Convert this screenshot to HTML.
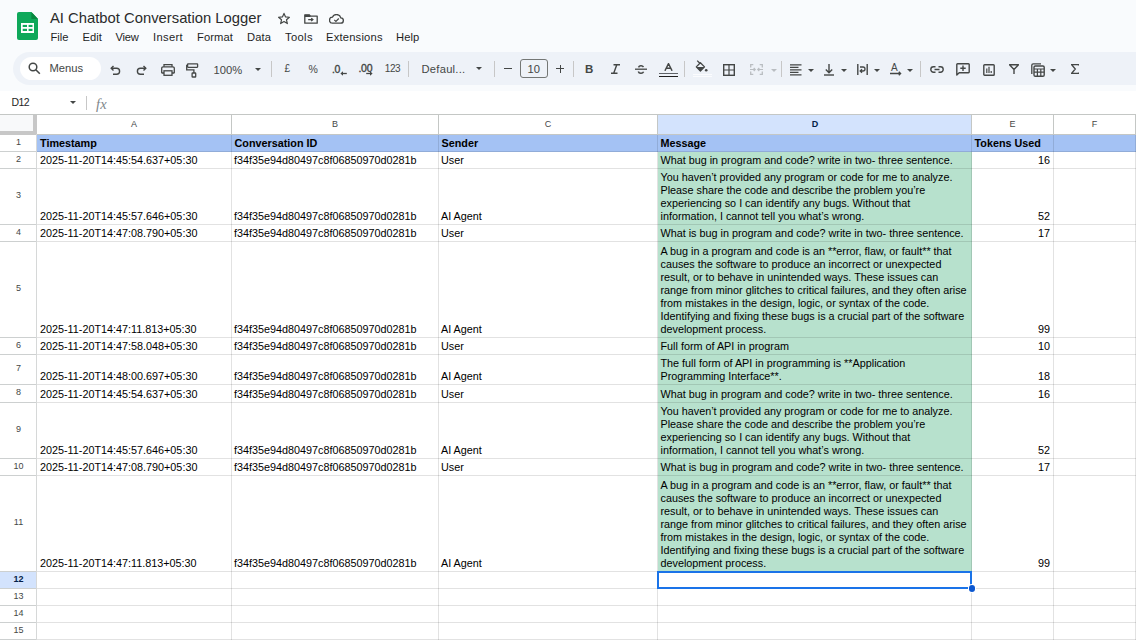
<!DOCTYPE html><html><head><meta charset="utf-8"><style>
html,body{margin:0;padding:0;}
body{width:1136px;height:640px;overflow:hidden;position:relative;background:#f9fbfd;font-family:"Liberation Sans", sans-serif;}
.r{position:absolute;}
.t{position:absolute;white-space:pre;}
.i{position:absolute;}
</style></head><body>
<svg class="i" style="left:17px;top:12px" width="21" height="28" viewBox="0 0 21 28">
<path d="M2 0H14.4L21 7V26a2 2 0 0 1-2 2H2a2 2 0 0 1-2-2V2a2 2 0 0 1 2-2z" fill="#0fa85a"/>
<path d="M14.4 0V7H21z" fill="#08873f"/>
<rect x="4" y="11" width="13" height="10" fill="#fff"/>
<rect x="5.7" y="12.9" width="4.3" height="2.1" fill="#0fa85a"/>
<rect x="11.6" y="12.9" width="3.9" height="2.1" fill="#0fa85a"/>
<rect x="5.7" y="16.8" width="4.3" height="2.2" fill="#0fa85a"/>
<rect x="11.6" y="16.8" width="3.9" height="2.2" fill="#0fa85a"/>
</svg>
<div class="t" style="left:50px;top:8.62px;font-size:14.8px;line-height:18px;color:#2b2b2b;">AI Chatbot Conversation Logger</div>
<svg class="i" style="left:277px;top:12px" width="14" height="13" viewBox="0 0 24 24"><path d="M12 2.6l2.9 6.5 7.1.6-5.4 4.7 1.6 7-6.2-3.8-6.2 3.8 1.6-7L2 9.7l7.1-.6z" fill="none" stroke="#444746" stroke-width="2.2" stroke-linejoin="round"/></svg>
<svg class="i" style="left:303.5px;top:13.8px" width="14" height="10" viewBox="0 0 14 10"><path d="M0.8 0.8H5.2L6.5 2.1H13.2V9.2H0.8Z" fill="none" stroke="#444746" stroke-width="1.3" stroke-linejoin="round"/><path d="M0.8 0.8H5.2L6.5 2.1V3H0.8Z" fill="#444746"/><path d="M4.2 5.6H8.8M7.2 4.1L8.9 5.6 7.2 7.1" fill="none" stroke="#444746" stroke-width="1.25"/></svg>
<svg class="i" style="left:329px;top:13.8px" width="15" height="10" viewBox="0 0 15 10"><path d="M3.6 9.2H11.5a2.7 2.7 0 0 0 .3-5.4A4.4 4.2 0 0 0 3.4 3.2 3 3 0 0 0 3.6 9.2Z" fill="none" stroke="#444746" stroke-width="1.3"/><path d="M5.3 5.9l1.6 1.5 2.9-2.9" fill="none" stroke="#444746" stroke-width="1.2"/></svg>
<div class="t" style="left:50.5px;top:29.72px;font-size:11.2px;line-height:14px;color:#1f1f1f;letter-spacing:0px;">File</div>
<div class="t" style="left:82.5px;top:29.72px;font-size:11.2px;line-height:14px;color:#1f1f1f;letter-spacing:0px;">Edit</div>
<div class="t" style="left:115.5px;top:29.72px;font-size:11.2px;line-height:14px;color:#1f1f1f;letter-spacing:-0.2px;">View</div>
<div class="t" style="left:153px;top:29.72px;font-size:11.2px;line-height:14px;color:#1f1f1f;letter-spacing:0.35px;">Insert</div>
<div class="t" style="left:197px;top:29.72px;font-size:11.2px;line-height:14px;color:#1f1f1f;letter-spacing:0.1px;">Format</div>
<div class="t" style="left:247px;top:29.72px;font-size:11.2px;line-height:14px;color:#1f1f1f;letter-spacing:0.15px;">Data</div>
<div class="t" style="left:285px;top:29.72px;font-size:11.2px;line-height:14px;color:#1f1f1f;letter-spacing:0.35px;">Tools</div>
<div class="t" style="left:326px;top:29.72px;font-size:11.2px;line-height:14px;color:#1f1f1f;letter-spacing:0.2px;">Extensions</div>
<div class="t" style="left:396px;top:29.72px;font-size:11.2px;line-height:14px;color:#1f1f1f;letter-spacing:0.1px;">Help</div>
<div class="r" style="left:13px;top:52px;width:1160px;height:33px;background:#eef2f8;border-radius:16.5px;"></div>
<div class="r" style="left:20px;top:57px;width:81px;height:23px;background:#fff;border-radius:11.5px;"></div>
<svg class="i" style="left:28px;top:62px" width="13" height="13" viewBox="0 0 13 13"><circle cx="5" cy="5" r="3.8" fill="none" stroke="#444746" stroke-width="1.5"/><path d="M7.8 7.8L11.8 11.8" stroke="#444746" stroke-width="1.6"/></svg>
<div class="t" style="left:49.5px;top:61.02px;font-size:11.2px;line-height:14px;color:#444746;">Menus</div>
<svg class="i" style="left:110px;top:64px" width="11" height="11" viewBox="0 0 11 11"><path d="M3.5 2L1.2 4.3 3.5 6.6" fill="none" stroke="#444746" stroke-width="1.4"/><path d="M1.5 4.3H6.6a3 3 0 0 1 0 6H3" fill="none" stroke="#444746" stroke-width="1.4"/></svg>
<svg class="i" style="left:136px;top:64px" width="11" height="11" viewBox="0 0 11 11"><path d="M7.5 2L9.8 4.3 7.5 6.6" fill="none" stroke="#444746" stroke-width="1.4"/><path d="M9.5 4.3H4.4a3 3 0 0 0 0 6H8" fill="none" stroke="#444746" stroke-width="1.4"/></svg>
<svg class="i" style="left:160.5px;top:63.5px" width="14" height="12" viewBox="0 0 14 12"><path d="M3 2.8V0.7H11V2.8" fill="none" stroke="#444746" stroke-width="1.3"/><path d="M3 9H1.1a.4.4 0 0 1-.4-.4V4.2a1.4 1.4 0 0 1 1.4-1.4H11.9a1.4 1.4 0 0 1 1.4 1.4V8.6a.4.4 0 0 1-.4.4H11" fill="none" stroke="#444746" stroke-width="1.3"/><rect x="3" y="6.8" width="8" height="4.5" fill="none" stroke="#444746" stroke-width="1.3"/></svg>
<svg class="i" style="left:186px;top:62.5px" width="13" height="15" viewBox="0 0 13 15"><rect x="1.6" y="0.8" width="10" height="3.5" rx="0.5" fill="none" stroke="#444746" stroke-width="1.3"/><path d="M1.6 2.5H0.7V6.9H7.9V10" fill="none" stroke="#444746" stroke-width="1.3"/><rect x="6.1" y="10" width="3.6" height="4" rx="0.6" fill="none" stroke="#444746" stroke-width="1.3"/></svg>
<div class="t" style="left:213.5px;top:62.62px;font-size:11.2px;line-height:14px;color:#444746;">100%</div>
<svg class="i" style="left:254.5px;top:67.8px" width="6" height="3" viewBox="0 0 6 3"><path d="M0 0H6L3 3z" fill="#444746"/></svg>
<div class="r" style="left:271px;top:60.5px;width:1px;height:16.5px;background:#c7c7c7;"></div>
<div class="t" style="left:284.5px;top:62.83px;font-size:10px;line-height:12px;color:#444746;">£</div>
<div class="t" style="left:308.5px;top:63.36px;font-size:10.5px;line-height:12px;color:#444746;">%</div>
<div class="t" style="left:332px;top:63.16px;font-size:10.5px;line-height:12px;color:#444746;-webkit-text-stroke:0.35px #444746;letter-spacing:-0.3px;">.0</div>
<svg class="i" style="left:339.5px;top:71px" width="7" height="5" viewBox="0 0 7 5"><path d="M6.8 2.5H1.5" stroke="#444746" stroke-width="1.3"/><path d="M0.4 2.5L3 0.3V4.7Z" fill="#444746"/></svg>
<div class="t" style="left:358.5px;top:61.56px;font-size:10.5px;line-height:12px;color:#444746;-webkit-text-stroke:0.35px #444746;letter-spacing:-0.3px;">.00</div>
<svg class="i" style="left:365.5px;top:71px" width="7" height="5" viewBox="0 0 7 5"><path d="M0.2 2.5H5.5" stroke="#444746" stroke-width="1.3"/><path d="M6.6 2.5L4 0.3V4.7Z" fill="#444746"/></svg>
<div class="t" style="left:384.8px;top:62.94px;font-size:10px;line-height:12px;color:#444746;letter-spacing:-0.45px;">123</div>
<div class="r" style="left:408px;top:60.5px;width:1px;height:16.5px;background:#c7c7c7;"></div>
<div class="t" style="left:421.5px;top:62.02px;font-size:11.2px;line-height:14px;color:#444746;letter-spacing:0.25px;">Defaul...</div>
<svg class="i" style="left:476.2px;top:67px" width="6" height="3" viewBox="0 0 6 3"><path d="M0 0H6L3 3z" fill="#444746"/></svg>
<div class="r" style="left:494px;top:60.5px;width:1px;height:16.5px;background:#c7c7c7;"></div>
<div class="r" style="left:504px;top:68px;width:8.3px;height:1.4px;background:#444746;"></div>
<div class="r" style="left:520px;top:59px;width:27.5px;height:19px;background:transparent;border:1px solid #747775;border-radius:3px;box-sizing:border-box;"></div>
<div class="t" style="left:527.5px;top:61.92px;font-size:11.2px;line-height:14px;color:#444746;">10</div>
<div class="r" style="left:556px;top:68px;width:8.4px;height:1.4px;background:#444746;"></div>
<div class="r" style="left:559.5px;top:64.5px;width:1.4px;height:8.4px;background:#444746;"></div>
<div class="r" style="left:573px;top:60.5px;width:1px;height:16.5px;background:#c7c7c7;"></div>
<div class="t" style="left:585px;top:62.02px;font-size:11.5px;line-height:14px;color:#444746;font-weight:bold;">B</div>
<svg class="i" style="left:610px;top:64px" width="11" height="10" viewBox="0 0 11 10"><path d="M3.5 0.7H10M1 9.3H7.5M6.8 0.7L3.7 9.3" fill="none" stroke="#444746" stroke-width="1.4"/></svg>
<svg class="i" style="left:634px;top:64px" width="14" height="11" viewBox="0 0 14 11"><path d="M1 5.2H13" stroke="#444746" stroke-width="1.3"/><path d="M9.5 3a2.8 2.4 0 0 0-5 0.3M4.3 7.5a2.8 2.4 0 0 0 5.3 0.3" fill="none" stroke="#444746" stroke-width="1.5"/></svg>
<svg class="i" style="left:664px;top:63px" width="9" height="8" viewBox="0 0 9 8"><path d="M0.9 7.8L4.5 0.6 8.1 7.8M2.2 5.3H6.8" fill="none" stroke="#444746" stroke-width="1.4" stroke-linejoin="round"/></svg>
<div class="r" style="left:659px;top:72.9px;width:19px;height:1.2px;background:#5f6368;"></div>
<div class="r" style="left:659px;top:75.8px;width:19px;height:1.5px;background:#1f1f1f;"></div>
<div class="r" style="left:684px;top:60.5px;width:1px;height:16.5px;background:#c7c7c7;"></div>
<svg class="i" style="left:695px;top:59.5px" width="13" height="13" viewBox="0 0 13 13"><path d="M2.2 0.6L4.8 3.2" stroke="#444746" stroke-width="1.3"/><path d="M1.3 6.9L5.4 2.8 9.5 6.9 5.4 11Z" fill="none" stroke="#444746" stroke-width="1.3" stroke-linejoin="round"/><path d="M1.3 6.9H9.5L5.4 11Z" fill="#444746"/><circle cx="11.2" cy="10.2" r="1.3" fill="#444746"/></svg>
<div class="r" style="left:692.5px;top:73.5px;width:19px;height:1.1px;background:#fbfcfe;"></div>
<div class="r" style="left:692.5px;top:76px;width:19px;height:1.1px;background:#fbfcfe;"></div>
<svg class="i" style="left:723px;top:63.5px" width="12" height="12" viewBox="0 0 12 12"><rect x="0.7" y="0.7" width="10.6" height="10.6" fill="none" stroke="#444746" stroke-width="1.4"/><path d="M6 0.7V11.3M0.7 6H11.3" stroke="#444746" stroke-width="1.2"/></svg>
<svg class="i" style="left:749.5px;top:64px" width="13" height="11" viewBox="0 0 13 11"><path d="M3.3 0.7H0.7V3.4M0.7 7.6V10.3H3.3M9.7 0.7H12.3V3.4M12.3 7.6V10.3H9.7" fill="none" stroke="#b9bdc1" stroke-width="1.3"/><path d="M0 5.5H5.2M3.7 4L5.2 5.5 3.7 7M13 5.5H7.8M9.3 4L7.8 5.5 9.3 7" fill="none" stroke="#b9bdc1" stroke-width="1.2"/></svg>
<svg class="i" style="left:770.5px;top:68.5px" width="6" height="3" viewBox="0 0 6 3"><path d="M0 0H6L3 3z" fill="#b9bdc1"/></svg>
<div class="r" style="left:781px;top:60.5px;width:1px;height:16.5px;background:#c7c7c7;"></div>
<svg class="i" style="left:790px;top:63.5px" width="12" height="12" viewBox="0 0 12 12"><path d="M0 0.8H11.5M0 3.3H8.5M0 5.8H11.5M0 8.3H8.5M0 10.8H11.5" stroke="#444746" stroke-width="1.2"/></svg>
<svg class="i" style="left:807.5px;top:68.5px" width="6" height="3" viewBox="0 0 6 3"><path d="M0 0H6L3 3z" fill="#444746"/></svg>
<svg class="i" style="left:824px;top:63.5px" width="10" height="12" viewBox="0 0 10 12"><path d="M5 0V8.5M1.8 5.5L5 8.7 8.2 5.5" fill="none" stroke="#444746" stroke-width="1.4"/><path d="M0 11H10" stroke="#444746" stroke-width="1.4"/></svg>
<svg class="i" style="left:840.6px;top:68.5px" width="6" height="3" viewBox="0 0 6 3"><path d="M0 0H6L3 3z" fill="#444746"/></svg>
<svg class="i" style="left:856.5px;top:63.5px" width="11" height="11" viewBox="0 0 11 11"><path d="M0.8 0V11M10.2 0V11" stroke="#444746" stroke-width="1.4"/><path d="M3 3H6a2 2 0 0 1 0 4H3.5M5 5.3L3.2 7 5 8.7" fill="none" stroke="#444746" stroke-width="1.3"/></svg>
<svg class="i" style="left:874.4px;top:68.5px" width="6" height="3" viewBox="0 0 6 3"><path d="M0 0H6L3 3z" fill="#444746"/></svg>
<div class="t" style="left:891px;top:61.53px;font-size:10px;line-height:12px;color:#444746;">A</div>
<svg class="i" style="left:890px;top:71px" width="12" height="5" viewBox="0 0 12 5"><path d="M0 2.5H10.5M8.8 0.8L10.6 2.5 8.8 4.2" fill="none" stroke="#444746" stroke-width="1.3"/></svg>
<svg class="i" style="left:907.3px;top:68.5px" width="6" height="3" viewBox="0 0 6 3"><path d="M0 0H6L3 3z" fill="#444746"/></svg>
<div class="r" style="left:920px;top:60.5px;width:1px;height:16.5px;background:#c7c7c7;"></div>
<svg class="i" style="left:929.5px;top:66px" width="14" height="7" viewBox="0 0 14 7"><path d="M5.5 0.8H3.5a2.7 2.7 0 0 0 0 5.4H5.5M8.5 0.8H10.5a2.7 2.7 0 0 1 0 5.4H8.5M4.5 3.5H9.5" fill="none" stroke="#444746" stroke-width="1.4"/></svg>
<svg class="i" style="left:955.5px;top:63px" width="14" height="13" viewBox="0 0 14 13"><path d="M0.8 12V1.5a0.7 0.7 0 0 1 .7-.7H12.5a.7.7 0 0 1 .7.7V9a.7.7 0 0 1-.7.7H3.2Z" fill="none" stroke="#444746" stroke-width="1.4" stroke-linejoin="round"/><path d="M7 2.5V8M4.3 5.2H9.7" stroke="#444746" stroke-width="1.4"/></svg>
<svg class="i" style="left:982.5px;top:63.5px" width="12" height="12" viewBox="0 0 12 12"><rect x="0.8" y="0.8" width="10.4" height="10.4" rx="0.8" fill="none" stroke="#444746" stroke-width="1.4"/><path d="M3.8 4.5V9M6 2.8V9M8.2 7V9" stroke="#444746" stroke-width="1.2"/></svg>
<svg class="i" style="left:1009px;top:64px" width="10" height="10" viewBox="0 0 10 10"><path d="M0.5 0.7H9.5L5 5.5ZM5 5V10" fill="none" stroke="#444746" stroke-width="1.4" stroke-linejoin="round"/></svg>
<svg class="i" style="left:1031px;top:62.5px" width="14" height="14" viewBox="0 0 14 14"><path d="M0.8 11V2.2a1.4 1.4 0 0 1 1.4-1.4H10" fill="none" stroke="#444746" stroke-width="1.3"/><rect x="3" y="3" width="10.2" height="10.2" rx="1.3" fill="none" stroke="#444746" stroke-width="1.4"/><path d="M3 6H13.2M3 9.2H13.2M6.4 6V13M9.8 6V13" stroke="#444746" stroke-width="1.2"/></svg>
<svg class="i" style="left:1050.2px;top:68.5px" width="6" height="3" viewBox="0 0 6 3"><path d="M0 0H6L3 3z" fill="#444746"/></svg>
<svg class="i" style="left:1070.5px;top:64.4px" width="8" height="10" viewBox="0 0 8 10"><path d="M7.5 1.6V0.7H0.7L4.3 5 0.7 9.3H7.5V8.4" fill="none" stroke="#444746" stroke-width="1.3"/></svg>
<div class="r" style="left:0px;top:91px;width:1136px;height:23px;background:#fff;"></div>
<div class="t" style="left:11.5px;top:96.16px;font-size:10.5px;line-height:13px;color:#1f1f1f;letter-spacing:-0.6px;">D12</div>
<svg class="i" style="left:70px;top:101px" width="6" height="3" viewBox="0 0 6 3"><path d="M0 0H6L3 3z" fill="#444746"/></svg>
<div class="r" style="left:86px;top:96px;width:1px;height:14px;background:#c7c7c7;"></div>
<div class="t" style="left:96px;top:96.5px;font-family:'Liberation Serif',serif;font-style:italic;font-size:14.5px;line-height:14px;color:#80868b;letter-spacing:0.3px">fx</div>
<div class="r" style="left:0px;top:114px;width:1136px;height:526px;background:#fff;"></div>
<div class="r" style="left:37px;top:135px;width:1099px;height:17px;background:#a4c2f4;"></div>
<div class="r" style="left:658px;top:152px;width:314px;height:420px;background:#b7e1cd;"></div>
<div class="r" style="left:658px;top:115px;width:313px;height:19px;background:#d3e3fd;"></div>
<div class="r" style="left:0px;top:572px;width:36px;height:16px;background:#d3e3fd;"></div>
<div class="r" style="left:0px;top:115px;width:37px;height:20px;background:#c7c7c7;"></div>
<div class="r" style="left:0px;top:115px;width:33px;height:16px;background:#f8f9fa;"></div>
<div class="r" style="left:37px;top:151px;width:1099px;height:1px;background:rgba(0,0,0,0.115);"></div>
<div class="r" style="left:37px;top:168px;width:1099px;height:1px;background:rgba(0,0,0,0.115);"></div>
<div class="r" style="left:37px;top:224px;width:1099px;height:1px;background:rgba(0,0,0,0.115);"></div>
<div class="r" style="left:37px;top:241px;width:1099px;height:1px;background:rgba(0,0,0,0.115);"></div>
<div class="r" style="left:37px;top:337px;width:1099px;height:1px;background:rgba(0,0,0,0.115);"></div>
<div class="r" style="left:37px;top:354px;width:1099px;height:1px;background:rgba(0,0,0,0.115);"></div>
<div class="r" style="left:37px;top:384px;width:1099px;height:1px;background:rgba(0,0,0,0.115);"></div>
<div class="r" style="left:37px;top:402px;width:1099px;height:1px;background:rgba(0,0,0,0.115);"></div>
<div class="r" style="left:37px;top:458px;width:1099px;height:1px;background:rgba(0,0,0,0.115);"></div>
<div class="r" style="left:37px;top:475px;width:1099px;height:1px;background:rgba(0,0,0,0.115);"></div>
<div class="r" style="left:37px;top:571px;width:1099px;height:1px;background:rgba(0,0,0,0.115);"></div>
<div class="r" style="left:37px;top:588px;width:1099px;height:1px;background:rgba(0,0,0,0.115);"></div>
<div class="r" style="left:37px;top:605px;width:1099px;height:1px;background:rgba(0,0,0,0.115);"></div>
<div class="r" style="left:37px;top:622px;width:1099px;height:1px;background:rgba(0,0,0,0.115);"></div>
<div class="r" style="left:37px;top:639px;width:1099px;height:1px;background:rgba(0,0,0,0.115);"></div>
<div class="r" style="left:0px;top:114px;width:1136px;height:1px;background:#c4c7c5;"></div>
<div class="r" style="left:36px;top:134px;width:1100px;height:1px;background:#c4c7c5;"></div>
<div class="r" style="left:0px;top:151px;width:36px;height:1px;background:#cdd0d0;"></div>
<div class="r" style="left:0px;top:168px;width:36px;height:1px;background:#cdd0d0;"></div>
<div class="r" style="left:0px;top:224px;width:36px;height:1px;background:#cdd0d0;"></div>
<div class="r" style="left:0px;top:241px;width:36px;height:1px;background:#cdd0d0;"></div>
<div class="r" style="left:0px;top:337px;width:36px;height:1px;background:#cdd0d0;"></div>
<div class="r" style="left:0px;top:354px;width:36px;height:1px;background:#cdd0d0;"></div>
<div class="r" style="left:0px;top:384px;width:36px;height:1px;background:#cdd0d0;"></div>
<div class="r" style="left:0px;top:402px;width:36px;height:1px;background:#cdd0d0;"></div>
<div class="r" style="left:0px;top:458px;width:36px;height:1px;background:#cdd0d0;"></div>
<div class="r" style="left:0px;top:475px;width:36px;height:1px;background:#cdd0d0;"></div>
<div class="r" style="left:0px;top:571px;width:36px;height:1px;background:#cdd0d0;"></div>
<div class="r" style="left:0px;top:588px;width:36px;height:1px;background:#cdd0d0;"></div>
<div class="r" style="left:0px;top:605px;width:36px;height:1px;background:#cdd0d0;"></div>
<div class="r" style="left:0px;top:622px;width:36px;height:1px;background:#cdd0d0;"></div>
<div class="r" style="left:0px;top:639px;width:36px;height:1px;background:#cdd0d0;"></div>
<div class="r" style="left:231px;top:115px;width:1px;height:19px;background:#c4c7c5;"></div>
<div class="r" style="left:231px;top:135px;width:1px;height:505px;background:rgba(0,0,0,0.115);"></div>
<div class="r" style="left:438px;top:115px;width:1px;height:19px;background:#c4c7c5;"></div>
<div class="r" style="left:438px;top:135px;width:1px;height:505px;background:rgba(0,0,0,0.115);"></div>
<div class="r" style="left:657px;top:115px;width:1px;height:19px;background:#c4c7c5;"></div>
<div class="r" style="left:657px;top:135px;width:1px;height:505px;background:rgba(0,0,0,0.115);"></div>
<div class="r" style="left:971px;top:115px;width:1px;height:19px;background:#c4c7c5;"></div>
<div class="r" style="left:971px;top:135px;width:1px;height:505px;background:rgba(0,0,0,0.115);"></div>
<div class="r" style="left:1053px;top:115px;width:1px;height:19px;background:#c4c7c5;"></div>
<div class="r" style="left:1053px;top:135px;width:1px;height:505px;background:rgba(0,0,0,0.115);"></div>
<div class="r" style="left:1135px;top:115px;width:1px;height:19px;background:#c4c7c5;"></div>
<div class="r" style="left:1135px;top:135px;width:1px;height:505px;background:rgba(0,0,0,0.115);"></div>
<div class="r" style="left:36px;top:134px;width:1px;height:506px;background:#d6d8d8;"></div>
<div class="t" style="left:34.0px;width:200px;top:118.68px;font-size:9px;line-height:11px;color:#444746;text-align:center;">A</div>
<div class="t" style="left:235.0px;width:200px;top:118.68px;font-size:9px;line-height:11px;color:#444746;text-align:center;">B</div>
<div class="t" style="left:448.0px;width:200px;top:118.68px;font-size:9px;line-height:11px;color:#444746;text-align:center;">C</div>
<div class="t" style="left:715.0px;width:200px;top:118.68px;font-size:9px;line-height:11px;color:#041e49;text-align:center;font-weight:bold;">D</div>
<div class="t" style="left:912.5px;width:200px;top:118.68px;font-size:9px;line-height:11px;color:#444746;text-align:center;">E</div>
<div class="t" style="left:994.5px;width:200px;top:118.68px;font-size:9px;line-height:11px;color:#444746;text-align:center;">F</div>
<div class="t" style="left:-81.5px;width:200px;top:136.68px;font-size:9px;line-height:11px;color:#444746;text-align:center;">1</div>
<div class="t" style="left:-81.5px;width:200px;top:153.68px;font-size:9px;line-height:11px;color:#444746;text-align:center;">2</div>
<div class="t" style="left:-81.5px;width:200px;top:190.18px;font-size:9px;line-height:11px;color:#444746;text-align:center;">3</div>
<div class="t" style="left:-81.5px;width:200px;top:226.68px;font-size:9px;line-height:11px;color:#444746;text-align:center;">4</div>
<div class="t" style="left:-81.5px;width:200px;top:283.18px;font-size:9px;line-height:11px;color:#444746;text-align:center;">5</div>
<div class="t" style="left:-81.5px;width:200px;top:339.68px;font-size:9px;line-height:11px;color:#444746;text-align:center;">6</div>
<div class="t" style="left:-81.5px;width:200px;top:363.18px;font-size:9px;line-height:11px;color:#444746;text-align:center;">7</div>
<div class="t" style="left:-81.5px;width:200px;top:387.18px;font-size:9px;line-height:11px;color:#444746;text-align:center;">8</div>
<div class="t" style="left:-81.5px;width:200px;top:424.18px;font-size:9px;line-height:11px;color:#444746;text-align:center;">9</div>
<div class="t" style="left:-81.5px;width:200px;top:460.68px;font-size:9px;line-height:11px;color:#444746;text-align:center;">10</div>
<div class="t" style="left:-81.5px;width:200px;top:517.18px;font-size:9px;line-height:11px;color:#444746;text-align:center;">11</div>
<div class="t" style="left:-81.5px;width:200px;top:573.68px;font-size:9px;line-height:11px;color:#041e49;text-align:center;font-weight:bold;">12</div>
<div class="t" style="left:-81.5px;width:200px;top:590.68px;font-size:9px;line-height:11px;color:#444746;text-align:center;">13</div>
<div class="t" style="left:-81.5px;width:200px;top:607.68px;font-size:9px;line-height:11px;color:#444746;text-align:center;">14</div>
<div class="t" style="left:-81.5px;width:200px;top:624.68px;font-size:9px;line-height:11px;color:#444746;text-align:center;">15</div>
<div class="t" style="left:40px;top:137.03px;font-size:10.8px;line-height:12.96px;color:#000;font-weight:bold;">Timestamp</div>
<div class="t" style="left:234.5px;top:137.03px;font-size:10.8px;line-height:12.96px;color:#000;font-weight:bold;">Conversation ID</div>
<div class="t" style="left:441.5px;top:137.03px;font-size:10.8px;line-height:12.96px;color:#000;font-weight:bold;">Sender</div>
<div class="t" style="left:660.5px;top:137.03px;font-size:10.8px;line-height:12.96px;color:#000;font-weight:bold;">Message</div>
<div class="t" style="left:974.5px;top:137.03px;font-size:10.8px;line-height:12.96px;color:#000;font-weight:bold;">Tokens Used</div>
<div class="t" style="left:40px;top:154.03px;font-size:10.8px;line-height:12.96px;color:#000;">2025-11-20T14:45:54.637+05:30</div>
<div class="t" style="left:234px;top:154.03px;font-size:10.8px;line-height:12.96px;color:#000;">f34f35e94d80497c8f06850970d0281b</div>
<div class="t" style="left:441px;top:154.03px;font-size:10.8px;line-height:12.96px;color:#000;">User</div>
<div class="t" style="left:660.5px;top:154.03px;font-size:10.8px;line-height:12.96px;color:#000;">What bug in program and code? write in two- three sentence.</div>
<div class="t" style="right:86px;top:154.03px;font-size:10.8px;line-height:12.96px;color:#000;text-align:right;">16</div>
<div class="t" style="left:40px;top:210.03px;font-size:10.8px;line-height:12.96px;color:#000;">2025-11-20T14:45:57.646+05:30</div>
<div class="t" style="left:234px;top:210.03px;font-size:10.8px;line-height:12.96px;color:#000;">f34f35e94d80497c8f06850970d0281b</div>
<div class="t" style="left:441px;top:210.03px;font-size:10.8px;line-height:12.96px;color:#000;">AI Agent</div>
<div class="t" style="left:660.5px;top:171.15px;font-size:10.8px;line-height:12.96px;color:#000;">You haven’t provided any program or code for me to analyze.<br>Please share the code and describe the problem you’re<br>experiencing so I can identify any bugs. Without that<br>information, I cannot tell you what’s wrong.</div>
<div class="t" style="right:86px;top:210.03px;font-size:10.8px;line-height:12.96px;color:#000;text-align:right;">52</div>
<div class="t" style="left:40px;top:227.03px;font-size:10.8px;line-height:12.96px;color:#000;">2025-11-20T14:47:08.790+05:30</div>
<div class="t" style="left:234px;top:227.03px;font-size:10.8px;line-height:12.96px;color:#000;">f34f35e94d80497c8f06850970d0281b</div>
<div class="t" style="left:441px;top:227.03px;font-size:10.8px;line-height:12.96px;color:#000;">User</div>
<div class="t" style="left:660.5px;top:227.03px;font-size:10.8px;line-height:12.96px;color:#000;">What is bug in program and code? write in two- three sentence.</div>
<div class="t" style="right:86px;top:227.03px;font-size:10.8px;line-height:12.96px;color:#000;text-align:right;">17</div>
<div class="t" style="left:40px;top:323.03px;font-size:10.8px;line-height:12.96px;color:#000;">2025-11-20T14:47:11.813+05:30</div>
<div class="t" style="left:234px;top:323.03px;font-size:10.8px;line-height:12.96px;color:#000;">f34f35e94d80497c8f06850970d0281b</div>
<div class="t" style="left:441px;top:323.03px;font-size:10.8px;line-height:12.96px;color:#000;">AI Agent</div>
<div class="t" style="left:660.5px;top:245.27px;font-size:10.8px;line-height:12.96px;color:#000;">A bug in a program and code is an **error, flaw, or fault** that<br>causes the software to produce an incorrect or unexpected<br>result, or to behave in unintended ways. These issues can<br>range from minor glitches to critical failures, and they often arise<br>from mistakes in the design, logic, or syntax of the code.<br>Identifying and fixing these bugs is a crucial part of the software<br>development process.</div>
<div class="t" style="right:86px;top:323.03px;font-size:10.8px;line-height:12.96px;color:#000;text-align:right;">99</div>
<div class="t" style="left:40px;top:340.03px;font-size:10.8px;line-height:12.96px;color:#000;">2025-11-20T14:47:58.048+05:30</div>
<div class="t" style="left:234px;top:340.03px;font-size:10.8px;line-height:12.96px;color:#000;">f34f35e94d80497c8f06850970d0281b</div>
<div class="t" style="left:441px;top:340.03px;font-size:10.8px;line-height:12.96px;color:#000;">User</div>
<div class="t" style="left:660.5px;top:340.03px;font-size:10.8px;line-height:12.96px;color:#000;">Full form of API in program</div>
<div class="t" style="right:86px;top:340.03px;font-size:10.8px;line-height:12.96px;color:#000;text-align:right;">10</div>
<div class="t" style="left:40px;top:370.03px;font-size:10.8px;line-height:12.96px;color:#000;">2025-11-20T14:48:00.697+05:30</div>
<div class="t" style="left:234px;top:370.03px;font-size:10.8px;line-height:12.96px;color:#000;">f34f35e94d80497c8f06850970d0281b</div>
<div class="t" style="left:441px;top:370.03px;font-size:10.8px;line-height:12.96px;color:#000;">AI Agent</div>
<div class="t" style="left:660.5px;top:357.07px;font-size:10.8px;line-height:12.96px;color:#000;">The full form of API in programming is **Application<br>Programming Interface**.</div>
<div class="t" style="right:86px;top:370.03px;font-size:10.8px;line-height:12.96px;color:#000;text-align:right;">18</div>
<div class="t" style="left:40px;top:388.03px;font-size:10.8px;line-height:12.96px;color:#000;">2025-11-20T14:45:54.637+05:30</div>
<div class="t" style="left:234px;top:388.03px;font-size:10.8px;line-height:12.96px;color:#000;">f34f35e94d80497c8f06850970d0281b</div>
<div class="t" style="left:441px;top:388.03px;font-size:10.8px;line-height:12.96px;color:#000;">User</div>
<div class="t" style="left:660.5px;top:388.03px;font-size:10.8px;line-height:12.96px;color:#000;">What bug in program and code? write in two- three sentence.</div>
<div class="t" style="right:86px;top:388.03px;font-size:10.8px;line-height:12.96px;color:#000;text-align:right;">16</div>
<div class="t" style="left:40px;top:444.03px;font-size:10.8px;line-height:12.96px;color:#000;">2025-11-20T14:45:57.646+05:30</div>
<div class="t" style="left:234px;top:444.03px;font-size:10.8px;line-height:12.96px;color:#000;">f34f35e94d80497c8f06850970d0281b</div>
<div class="t" style="left:441px;top:444.03px;font-size:10.8px;line-height:12.96px;color:#000;">AI Agent</div>
<div class="t" style="left:660.5px;top:405.15px;font-size:10.8px;line-height:12.96px;color:#000;">You haven’t provided any program or code for me to analyze.<br>Please share the code and describe the problem you’re<br>experiencing so I can identify any bugs. Without that<br>information, I cannot tell you what’s wrong.</div>
<div class="t" style="right:86px;top:444.03px;font-size:10.8px;line-height:12.96px;color:#000;text-align:right;">52</div>
<div class="t" style="left:40px;top:461.03px;font-size:10.8px;line-height:12.96px;color:#000;">2025-11-20T14:47:08.790+05:30</div>
<div class="t" style="left:234px;top:461.03px;font-size:10.8px;line-height:12.96px;color:#000;">f34f35e94d80497c8f06850970d0281b</div>
<div class="t" style="left:441px;top:461.03px;font-size:10.8px;line-height:12.96px;color:#000;">User</div>
<div class="t" style="left:660.5px;top:461.03px;font-size:10.8px;line-height:12.96px;color:#000;">What is bug in program and code? write in two- three sentence.</div>
<div class="t" style="right:86px;top:461.03px;font-size:10.8px;line-height:12.96px;color:#000;text-align:right;">17</div>
<div class="t" style="left:40px;top:557.03px;font-size:10.8px;line-height:12.96px;color:#000;">2025-11-20T14:47:11.813+05:30</div>
<div class="t" style="left:234px;top:557.03px;font-size:10.8px;line-height:12.96px;color:#000;">f34f35e94d80497c8f06850970d0281b</div>
<div class="t" style="left:441px;top:557.03px;font-size:10.8px;line-height:12.96px;color:#000;">AI Agent</div>
<div class="t" style="left:660.5px;top:479.27px;font-size:10.8px;line-height:12.96px;color:#000;">A bug in a program and code is an **error, flaw, or fault** that<br>causes the software to produce an incorrect or unexpected<br>result, or to behave in unintended ways. These issues can<br>range from minor glitches to critical failures, and they often arise<br>from mistakes in the design, logic, or syntax of the code.<br>Identifying and fixing these bugs is a crucial part of the software<br>development process.</div>
<div class="t" style="right:86px;top:557.03px;font-size:10.8px;line-height:12.96px;color:#000;text-align:right;">99</div>
<div class="r" style="left:657px;top:571px;width:315px;height:18px;border:2px solid #1a73e8;box-sizing:border-box;"></div>
<div class="r" style="left:968.6px;top:585.1px;width:6.6px;height:6.6px;border-radius:50%;background:#0b57d0;box-shadow:0 0 0 1px #fff;"></div>
</body></html>
